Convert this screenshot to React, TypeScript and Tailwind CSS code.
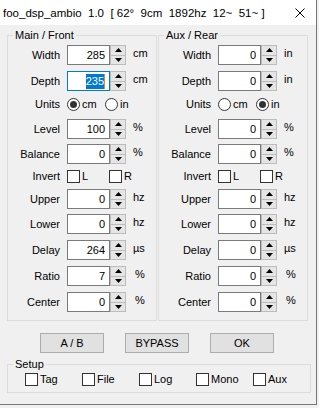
import React from "react";

type NumRow = { kind: "num"; label: string; value: string; unit: string; focused?: boolean; shift?: boolean };
type UnitsRow = { kind: "units"; inches: boolean };
type InvertRow = { kind: "invert" };
type Row = NumRow | UnitsRow | InvertRow;

const gaps = [
  "mt-[2px]",
  "mt-[6px]",
  "mt-[3px]",
  "mt-[5px]",
  "mt-[5px]",
  "mt-[2px]",
  "mt-[3px]",
  "mt-[5px]",
  "mt-[6px]",
  "mt-[6px]",
  "mt-[6px]",
];

const buildRows = (inches: boolean, v: string[]): Row[] => {
  const u = inches ? "in" : "cm";
  return [
    { kind: "num", label: "Width", value: v[0], unit: u },
    { kind: "num", label: "Depth", value: v[1], unit: u, focused: !inches },
    { kind: "units", inches },
    { kind: "num", label: "Level", value: v[2], unit: "%" },
    { kind: "num", label: "Balance", value: v[3], unit: "%" },
    { kind: "invert" },
    { kind: "num", label: "Upper", value: v[4], unit: "hz" },
    { kind: "num", label: "Lower", value: v[5], unit: "hz" },
    { kind: "num", label: "Delay", value: v[6], unit: "µs" },
    { kind: "num", label: "Ratio", value: v[7], unit: "%", shift: true },
    { kind: "num", label: "Center", value: v[8], unit: "%", shift: true },
  ];
};

const Arrow = ({ down }: { down?: boolean }) => (
  <svg width="7" height="4" viewBox="0 0 7 4">
    <path d={down ? "M0 0 L7 0 L3.5 4 Z" : "M3.5 0 L7 4 L0 4 Z"} fill="#000" />
  </svg>
);

const Spinner = () => (
  <div className="flex h-[20px] w-[16px] flex-col border border-[#bcbcbc] bg-[#e5e5e5]">
    <div className="flex flex-1 items-center justify-center border-b border-[#bcbcbc]">
      <Arrow />
    </div>
    <div className="flex flex-1 items-center justify-center">
      <Arrow down />
    </div>
  </div>
);

const Radio = ({ checked }: { checked: boolean }) => (
  <span className="flex h-[13px] w-[13px] items-center justify-center rounded-full border border-[#333] bg-white">
    {checked && <span className="h-[7px] w-[7px] rounded-full bg-[#333]" />}
  </span>
);

const Check = () => <span className="h-[13px] w-[13px] border border-[#333] bg-white" />;

const Label = ({ text }: { text: string }) => (
  <span className="w-[52px] shrink-0 text-right">{text}</span>
);

const RowView = ({ row }: { row: Row }) => {
  if (row.kind === "units") {
    return (
      <div className="flex h-[20px] items-center">
        <Label text="Units" />
        <div className="ml-[7px] flex w-[38px] items-center gap-[2px]">
          <Radio checked={!row.inches} />
          <span>cm</span>
        </div>
        <div className="flex items-center gap-[2px]">
          <Radio checked={row.inches} />
          <span>in</span>
        </div>
      </div>
    );
  }
  if (row.kind === "invert") {
    return (
      <div className="flex h-[20px] items-center">
        <Label text="Invert" />
        <div className="ml-[7px] flex w-[42px] items-center gap-[2px]">
          <Check />
          <span>L</span>
        </div>
        <div className="flex items-center gap-[2px]">
          <Check />
          <span>R</span>
        </div>
      </div>
    );
  }
  return (
    <div className="flex h-[20px] items-center">
      <Label text={row.label} />
      <div
        className={`ml-[7px] flex h-[20px] w-[43px] items-center justify-end border bg-white pr-[4px] ${
          row.focused ? "border-[#0078d7]" : "border-[#7a7a7a]"
        }`}
      >
        {row.focused ? (
          <>
            <span className="bg-[#0078d7] leading-[15px] text-white">{row.value}</span>
            <span className="h-[15px] w-[1px] bg-[#e88a1a]" />
          </>
        ) : (
          <span>{row.value}</span>
        )}
      </div>
      <Spinner />
      <span className={`-mt-[4px] ${row.shift ? "ml-[9px]" : "ml-[7px]"}`}>{row.unit}</span>
    </div>
  );
};

const Group = ({ title, rows }: { title: string; rows: Row[] }) => (
  <fieldset className="w-[150px] border border-[#dcdcdc] px-0 pb-[8px] pt-0">
    <legend className="ml-[5px] px-[2px] leading-[16px]">{title}</legend>
    <div className="flex flex-col">
      {rows.map((r, i) => (
        <div key={i} className={gaps[i]}>
          <RowView row={r} />
        </div>
      ))}
    </div>
  </fieldset>
);

const Button = ({ text }: { text: string }) => (
  <button className="flex h-[20px] w-[64px] items-center justify-center border border-[#adadad] bg-[#e1e1e1]">
    {text}
  </button>
);

export default function App() {
  const main = buildRows(false, ["285", "235", "100", "0", "0", "0", "264", "7", "0"]);
  const aux = buildRows(true, ["0", "0", "0", "0", "0", "0", "0", "0", "0"]);
  const setup = ["Tag", "File", "Log", "Mono", "Aux"];

  return (
    <div className="h-[408px] w-[319px] overflow-hidden bg-[#f0f0f0] font-['Liberation_Sans',Arial,sans-serif] text-[11px] leading-[16px] text-black">
      <div className="flex h-[405px] w-[317px] flex-col border-b border-r border-[#767676] bg-[#f0f0f0]">
        {/* title bar */}
        <div className="flex h-[25px] shrink-0 items-center justify-between bg-white pl-[3px] pr-[11px] text-[11.5px]">
          <span className="whitespace-pre">foo_dsp_ambio  1.0  [ 62°  9cm  1892hz  12~  51~ ]</span>
          <svg width="10" height="10" viewBox="0 0 10 10">
            <path d="M0.5 0.5 L9.5 9.5 M9.5 0.5 L0.5 9.5" stroke="#000" strokeWidth="1" />
          </svg>
        </div>

        <div className="flex flex-col px-[7px] pt-[2px]">
          <div className="flex gap-[1px]">
            <Group title="Main / Front" rows={main} />
            <Group title="Aux / Rear" rows={aux} />
          </div>

          <div className="ml-[33px] mt-[12px] flex gap-[21px]">
            <Button text="A / B" />
            <Button text="BYPASS" />
            <Button text="OK" />
          </div>

          <fieldset className="mt-[3px] w-[301px] border border-[#dcdcdc] px-0 pb-[6px] pt-0">
            <legend className="ml-[5px] px-[2px] leading-[16px]">Setup</legend>
            <div className="ml-[17px] flex h-[14px] items-center">
              {setup.map((s) => (
                <div key={s} className="flex w-[57px] items-center gap-[2px]">
                  <Check />
                  <span>{s}</span>
                </div>
              ))}
            </div>
          </fieldset>
        </div>
      </div>
    </div>
  );
}
